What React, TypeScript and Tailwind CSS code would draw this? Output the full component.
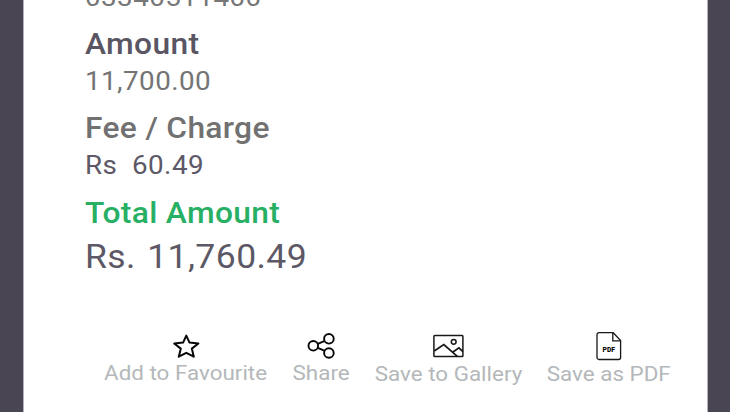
import type { ReactNode } from "react";
import { cva } from "class-variance-authority";
import clsx from "clsx";

const amountText = cva("origin-left whitespace-pre", {
  variants: {
    kind: {
      label: "h-[42px] text-[29px] leading-[42px] font-medium scale-x-[1.095] tracking-[0.3px]",
      value: "h-8 text-[25.5px] leading-8 scale-x-[1.09] tracking-[0.4px]",
      total: "h-11 text-[34px] leading-11 scale-x-[1.045] tracking-[0.4px] [word-spacing:2px]",
    },
  },
});

function Detail({
  label,
  labelColor,
  value,
  valueColor,
  total = false,
}: {
  label?: string;
  labelColor?: string;
  value: string;
  valueColor: string;
  total?: boolean;
}) {
  return (
    <div className="mb-[10.4px]">
      {label ? <p className={clsx(amountText({ kind: "label" }), labelColor)}>{label}</p> : null}
      <p className={clsx(amountText({ kind: total ? "total" : "value" }), valueColor)}>{value}</p>
    </div>
  );
}

function Action({
  label,
  icon,
  className,
  lowered = false,
}: {
  label: string;
  icon: ReactNode;
  className: string;
  lowered?: boolean;
}) {
  return (
    <button type="button" className={clsx("flex flex-col items-center", className)}>
      <span className="flex h-[30px] items-center justify-center">{icon}</span>
      <span
        className={clsx(
          "h-6 scale-x-[1.093] text-[20.5px] leading-6 whitespace-nowrap text-[#b4b8ba]",
          lowered && "mt-px",
        )}
      >
        {label}
      </span>
    </button>
  );
}

function StarIcon() {
  return (
    <svg width="30" height="30" viewBox="0 0 30 30" fill="none" stroke="#080808" strokeWidth="2" strokeLinejoin="round">
      <path d="M15.3 4.6 18.5 11.6 27.4 12.5 20.8 17.6 22.8 25.7 15.3 21.8 7.8 25.7 9.8 17.6 3.2 12.5 12.1 11.6Z" />
    </svg>
  );
}

function ShareIcon() {
  return (
    <svg width="30" height="30" viewBox="0 0 30 30" fill="none" stroke="#080808" strokeWidth="1.9">
      <circle cx="7.3" cy="14.8" r="4.8" />
      <circle cx="22.9" cy="7.8" r="4.8" />
      <circle cx="22.9" cy="22" r="4.8" />
      <path d="m11.8 12.9 6.4-2.7M11.8 16.9l6.4 2.8" />
    </svg>
  );
}

function GalleryIcon() {
  return (
    <svg width="32" height="30" viewBox="0 0 32 30" fill="none" stroke="#181818" strokeWidth="1.5">
      <rect x="1.9" y="4.5" width="29" height="21" rx="0.8" />
      <circle cx="21.7" cy="10.8" r="2.4" />
      <path d="m2.2 19.9 9.6-6.3L25.6 25.6M21 21l5.9-4.2 4 3.8" strokeWidth="1.8" />
    </svg>
  );
}

function PdfIcon() {
  return (
    <svg width="26" height="30" viewBox="0 0 26 30" fill="none" stroke="#181818" strokeWidth="1.3">
      <path d="M3 1.7h14.2l7.4 7.8v17a2 2 0 0 1-2 2H3a2 2 0 0 1-2-2v-22.8a2 2 0 0 1 2-2Z" />
      <path d="M16.8 2v7.8h7.6" />
      <text x="12.8" y="21.4" textAnchor="middle" fill="#080808" stroke="none" className="text-[6.8px] font-black">
        PDF
      </text>
    </svg>
  );
}

export default function App() {
  return (
    <div className="h-[412px] w-[730px] overflow-hidden bg-[#4a4553] pr-[22px] pl-[23px] font-[Roboto,sans-serif]">
      <main className="h-full overflow-hidden border-x border-[#b5b3b9] bg-white">
        <section className="-mt-[19.5px] pl-[60.5px]">
          <Detail value="03340511400" valueColor="text-[#777777]" />
          <Detail label="Amount" labelColor="text-[#5a5563]" value="11,700.00" valueColor="text-[#747474]" />
          <Detail label="Fee / Charge" labelColor="text-[#717171]" value="Rs  60.49" valueColor="text-[#5c5865]" />
          <Detail
            label="Total Amount"
            labelColor="text-[#27b064]"
            value="Rs. 11,760.49"
            valueColor="text-[#5c5865]"
            total
          />
        </section>
        <nav className="mt-[53.5px] flex">
          <Action className="ml-[80px] w-[164px]" label="Add to Favourite" icon={<StarIcon />} />
          <Action className="ml-[24px] w-[58px]" label="Share" icon={<ShareIcon />} />
          <Action className="ml-[24px] w-[148px]" label="Save to Gallery" icon={<GalleryIcon />} lowered />
          <Action className="ml-[24px] w-[125px]" label="Save as PDF" icon={<PdfIcon />} lowered />
        </nav>
      </main>
    </div>
  );
}
